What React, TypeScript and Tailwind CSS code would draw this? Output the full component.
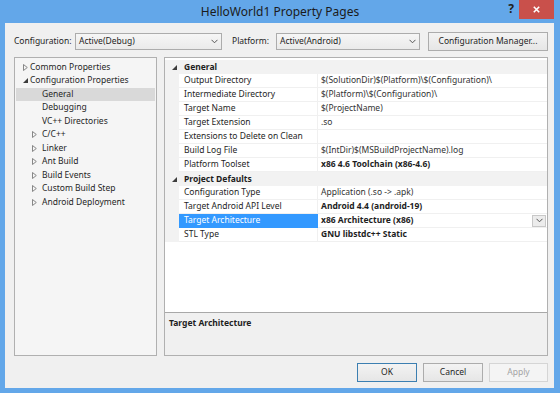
import React from "react";

function Chevron() {
  return (
    <svg width="7" height="5" viewBox="0 0 7 5">
      <path d="M0.5 0.8 L3.5 3.8 L6.5 0.8" fill="none" stroke="#555" strokeWidth="1" />
    </svg>
  );
}

function Collapsed() {
  return (
    <svg width="5" height="7" viewBox="0 0 5 7">
      <path d="M0.5 0.5 L4.3 3.5 L0.5 6.5 Z" fill="none" stroke="#7a7a7a" strokeWidth="0.9" />
    </svg>
  );
}

function Expanded() {
  return (
    <svg width="5" height="5" viewBox="0 0 5 5">
      <path d="M5 0 L5 5 L0 5 Z" fill="#3c3c3c" />
    </svg>
  );
}

type TreeItem = { label: string; level: 0 | 1; state: "collapsed" | "expanded" | "none"; selected?: boolean };

const tree: TreeItem[] = [
  { label: "Common Properties", level: 0, state: "collapsed" },
  { label: "Configuration Properties", level: 0, state: "expanded" },
  { label: "General", level: 1, state: "none", selected: true },
  { label: "Debugging", level: 1, state: "none" },
  { label: "VC++ Directories", level: 1, state: "none" },
  { label: "C/C++", level: 1, state: "collapsed" },
  { label: "Linker", level: 1, state: "collapsed" },
  { label: "Ant Build", level: 1, state: "collapsed" },
  { label: "Build Events", level: 1, state: "collapsed" },
  { label: "Custom Build Step", level: 1, state: "collapsed" },
  { label: "Android Deployment", level: 1, state: "collapsed" },
];

type Prop = { name: string; value: string; bold?: boolean; selected?: boolean };
type Cat = { title: string; props: Prop[] };

const cats: Cat[] = [
  {
    title: "General",
    props: [
      { name: "Output Directory", value: "$(SolutionDir)$(Platform)\\$(Configuration)\\" },
      { name: "Intermediate Directory", value: "$(Platform)\\$(Configuration)\\" },
      { name: "Target Name", value: "$(ProjectName)" },
      { name: "Target Extension", value: ".so" },
      { name: "Extensions to Delete on Clean", value: "" },
      { name: "Build Log File", value: "$(IntDir)$(MSBuildProjectName).log" },
      { name: "Platform Toolset", value: "x86 4.6 Toolchain (x86-4.6)", bold: true },
    ],
  },
  {
    title: "Project Defaults",
    props: [
      { name: "Configuration Type", value: "Application (.so -> .apk)" },
      { name: "Target Android API Level", value: "Android 4.4 (android-19)", bold: true },
      { name: "Target Architecture", value: "x86 Architecture (x86)", bold: true, selected: true },
      { name: "STL Type", value: "GNU libstdc++ Static", bold: true },
    ],
  },
];

function Combo({ text, w }: { text: string; w: string }) {
  return (
    <div
      className={`${w} h-[17px] border border-[#acacac] bg-gradient-to-b from-[#f6f6f6] to-[#eaeaea] flex items-center justify-between pl-[3px] pr-[3px] text-[8.5px] text-[#1e1e1e]`}
    >
      <span>{text}</span>
      <Chevron />
    </div>
  );
}

export default function App() {
  return (
    <div className="w-[560px] h-[393px] bg-[#63a7e9] flex flex-col [font-family:'Noto_Sans','Open_Sans',sans-serif] overflow-hidden">
      {/* title bar */}
      <div className="h-[23px] relative flex items-center justify-center">
        <span className="text-[12px] text-[#1b1b1b] leading-none mt-[1px]">HelloWorld1 Property Pages</span>
        <div className="absolute right-[6px] top-0 flex items-start">
          <span className="text-[12px] font-bold text-[#222] mr-[5px] mt-[3px] leading-none">?</span>
          <div className="w-[35px] h-[19px] bg-[#c9504b] flex items-center justify-center">
            <svg width="7" height="7" viewBox="0 0 7 7">
              <path d="M0.8 0.8 L6.2 6.2 M6.2 0.8 L0.8 6.2" stroke="#fff" strokeWidth="1.6" />
            </svg>
          </div>
        </div>
      </div>

      {/* client */}
      <div className="flex-1 ml-[5px] mr-[6px] mb-[5px] bg-[#f0f0f0] flex flex-col pt-[9px] pl-[9px] pr-[6px] pb-[6px]">
        {/* config row */}
        <div className="h-[19px] flex items-center text-[8.5px] text-[#1e1e1e]">
          <span className="w-[61px]">Configuration:</span>
          <Combo text="Active(Debug)" w="w-[147px]" />
          <span className="ml-[10px] w-[44px]">Platform:</span>
          <Combo text="Active(Android)" w="w-[144px]" />
          <div className="ml-[8px] w-[120px] h-[19px] border border-[#acacac] bg-gradient-to-b from-[#f3f3f3] to-[#e6e6e6] flex items-center justify-center">
            Configuration Manager...
          </div>
        </div>

        {/* panels */}
        <div className="mt-[6px] h-[299px] flex gap-[7px]">
          {/* tree */}
          <div className="w-[143px] border border-[#b0b0b0] bg-[#f5f5f5] pt-[2.5px] text-[8.5px] text-[#262626]">
            {tree.map((t) => (
              <div
                key={t.label}
                className={`h-[13.5px] mx-[1px] flex items-center ${t.selected ? "bg-[#d9d9d9]" : ""} ${
                  t.level === 0 ? "pl-[7px]" : "pl-[16px]"
                }`}
              >
                <span className={`${t.level === 0 ? "w-[7px]" : "w-[10px]"} flex items-center`}>
                  {t.state === "collapsed" && <Collapsed />}
                  {t.state === "expanded" && <Expanded />}
                </span>
                <span>{t.label}</span>
              </div>
            ))}
          </div>

          {/* property pane */}
          <div className="w-[384px] border border-[#b0b0b0] flex flex-col">
            <div className="flex-1 bg-white pt-[2px] text-[8.5px] text-[#1e1e1e]">
              {cats.map((c) => (
                <React.Fragment key={c.title}>
                  <div className="h-[14px] bg-[#f2f2f2] flex items-center">
                    <span className="w-[14px] flex justify-end pr-[2px]">
                      <Expanded />
                    </span>
                    <span className="pl-[5px] font-bold">{c.title}</span>
                  </div>
                  {c.props.map((p) => (
                    <div key={p.name} className="h-[14px] flex">
                      <div className="w-[14px] bg-[#f2f2f2]" />
                      <div
                        className={`w-[139px] flex items-center pl-[5px] border-b border-r ${
                          p.selected
                            ? "bg-[#3399ff] text-white border-[#3399ff]"
                            : "border-[#f0f0f0]"
                        }`}
                      >
                        <span className="whitespace-nowrap">{p.name}</span>
                      </div>
                      <div className="flex-1 flex items-center justify-between pl-[3px] pr-[1px] border-b border-[#f0f0f0]">
                        <span className={`whitespace-nowrap ${p.bold ? "font-bold" : "text-[#333]"}`}>{p.value}</span>
                        {p.selected && (
                          <div className="w-[14px] h-[12px] border border-[#c8c8c8] bg-[#ececec] flex items-center justify-center">
                            <Chevron />
                          </div>
                        )}
                      </div>
                    </div>
                  ))}
                </React.Fragment>
              ))}
            </div>
            <div className="h-[43px] border-t border-[#a8a8a8] bg-[#f0f0f0] pt-[4px] pl-[4px] text-[8.5px] font-bold text-[#1e1e1e]">
              Target Architecture
            </div>
          </div>
        </div>

        {/* buttons */}
        <div className="mt-[7px] h-[19px] flex justify-end gap-[6px] text-[8.5px]">
          <div className="w-[60px] border border-[#3c7fb1] bg-gradient-to-b from-[#f3f3f3] to-[#e6e6e6] flex items-center justify-center text-[#1e1e1e]">
            OK
          </div>
          <div className="w-[60px] border border-[#acacac] bg-gradient-to-b from-[#f3f3f3] to-[#e6e6e6] flex items-center justify-center text-[#1e1e1e]">
            Cancel
          </div>
          <div className="w-[59px] border border-[#d5d5d5] bg-[#f4f4f4] flex items-center justify-center text-[#a3a3a3]">
            Apply
          </div>
        </div>
      </div>
    </div>
  );
}
